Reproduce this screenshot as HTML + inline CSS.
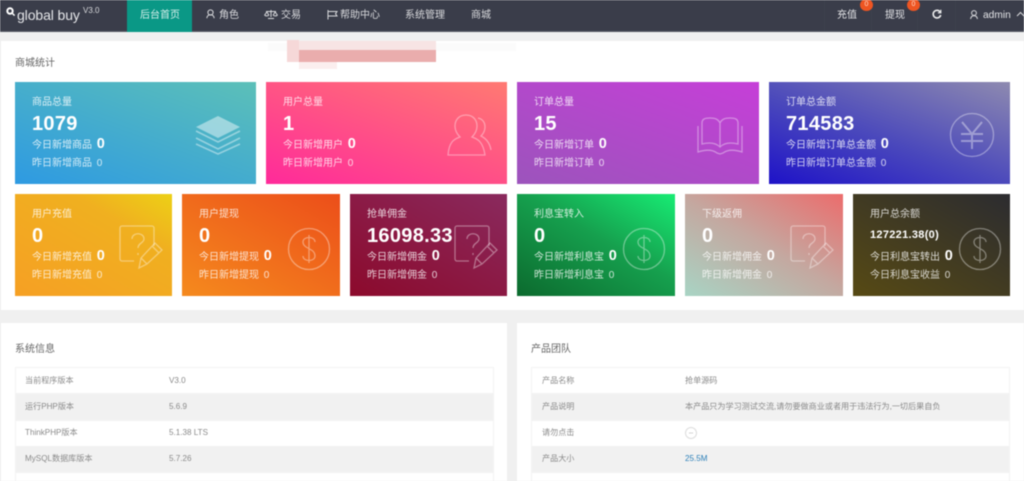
<!DOCTYPE html>
<html lang="zh"><head><meta charset="utf-8"><title>global buy</title>
<style>
*{box-sizing:border-box}
html,body{margin:0;padding:0;width:1024px;height:481px;overflow:hidden;background:#f0f0f0}
body{font-family:"Liberation Sans","Noto Sans CJK SC",sans-serif;position:relative}
#w{position:absolute;left:0;top:0;width:1024px;height:481px;overflow:hidden;filter:blur(.5px)}
.a{position:absolute;white-space:nowrap;line-height:1}
.nav{position:absolute;left:0;top:0;width:1024px;height:32px;background:#3a3d4a;border-bottom:1px solid #5a5c66}
.n{position:absolute;top:10px;font-size:10px;line-height:11px;color:#d8d9dc;white-space:nowrap}
.sep{position:absolute;top:0;width:1px;height:31px;background:#3e414d}
.bd{position:absolute;top:-1px;width:13px;height:12px;border-radius:50%;background:#ee5522;color:#ffd9c8;font-size:7px;line-height:11px;text-align:center}
.p{position:absolute;background:#fff}
.c{position:absolute;height:102px;color:#fff;overflow:hidden}
.c div{position:absolute;left:17px;white-space:nowrap;line-height:1}
.t{top:16px;font-size:10px;color:rgba(255,255,255,.8)}
.v{top:32px;font-size:20px;font-weight:bold;letter-spacing:.3px}
.d{top:55px;font-size:10px;color:rgba(255,255,255,.8)}
.d b{font-size:14.5px;color:#fff;margin-left:2px;position:relative;top:0}
.y{top:77px;font-size:10px;color:rgba(255,255,255,.78)}
.y i{font-style:normal;margin-left:2px}
.c svg{position:absolute;fill:none;stroke:rgba(255,255,255,.38);stroke-width:1.3}
.h{position:absolute;font-size:10px;line-height:11px;color:#666;white-space:nowrap}
.r{position:absolute;height:27px;border:1px solid #f3f3f3;border-top:0;font-size:8.1px;line-height:26px;color:#8a8a8a;white-space:nowrap}
.r.g{background:#f1f1f1}
.r span{position:absolute;top:0}
</style></head><body><div id="w">

<div class="nav">
<svg class="a" style="left:6px;top:7px" width="10" height="10" viewBox="0 0 10 10"><circle cx="4" cy="4" r="2.700" fill="#3a3d4a" stroke="#fff" stroke-width="2"/><path d="M6 6l2.600 2.600" stroke="#fff" stroke-width="1.500"/></svg>
<div class="a" style="left:17px;top:6px;font-size:14px;color:#e4e5e8;line-height:18px;letter-spacing:-.1px">global buy</div>
<div class="a" style="left:83px;top:7px;font-size:8px;color:#d8d9dc">V3.0</div>
<div class="a" style="left:127px;top:0;width:65px;height:32px;background:#0a9886"></div>
<div class="n" style="left:140px;color:#d7f0ec">后台首页</div>
<svg class="a" style="left:206px;top:9px" width="9" height="11" viewBox="0 0 9 11" fill="none" stroke="#d8d9dc"><circle cx="4.500" cy="3.500" r="2.600"/><path d="M.8 9.200c.4-2.600 1.800-3.400 3.700-3.400s3.300.8 3.700 3.400"/></svg>
<div class="n" style="left:219px">角色</div>
<svg class="a" style="left:264px;top:9px" width="14" height="11" viewBox="0 0 14 11" fill="none" stroke="#d8d9dc"><path d="M2 2.500h10M7 1v7M4 9.500h6M.7 6L2.800 3l2 3c-.4 1.200-3.600 1.200-4.100 0zM9.200 6l2-3 2.100 3c-.5 1.200-3.700 1.200-4.100 0z"/></svg>
<div class="n" style="left:281px">交易</div>
<svg class="a" style="left:327px;top:10px" width="11" height="10" viewBox="0 0 11 10" fill="none" stroke="#d8d9dc"><path d="M1 0v9.500M1 1.500h9L8.500 3.800 10 6H1"/></svg>
<div class="n" style="left:340px">帮助中心</div>
<div class="n" style="left:405px">系统管理</div>
<div class="n" style="left:471px">商城</div>
<div class="sep" style="left:824px"></div><div class="sep" style="left:871px"></div><div class="sep" style="left:917px"></div><div class="sep" style="left:955px"></div>
<div class="n" style="left:837px;color:#e4e5e8">充值</div>
<div class="bd" style="left:860px">0</div>
<div class="n" style="left:885px;color:#e4e5e8">提现</div>
<div class="bd" style="left:907px">0</div>
<svg class="a" style="left:932px;top:9px" width="10" height="10" viewBox="0 0 10 10" fill="none" stroke="#eceded" stroke-width="1.600"><path d="M8.300 3.200A3.800 3.800 0 1 0 8.700 6"/><path d="M8.800 .8v3H5.900" stroke-width="1.200"/></svg>
<svg class="a" style="left:970px;top:10px" width="8" height="10" viewBox="0 0 8 10" fill="none" stroke="#d8d9dc"><circle cx="4" cy="3" r="2.400"/><path d="M.6 9c.3-2.500 1.600-3.300 3.400-3.300S7.100 6.500 7.400 9"/></svg>
<div class="n" style="left:983px;font-size:10.200px;color:#e4e5e8">admin</div>
<svg class="a" style="left:1016px;top:11px" width="9" height="6" viewBox="0 0 9 6" fill="none" stroke="#d8d9dc"><path d="M1 5l3.500-3.500L8 5"/></svg>
</div>

<div class="p" style="left:1px;top:41px;width:1023px;height:269px"></div>
<div class="a" style="left:268px;top:43px;width:248px;height:8px;background:#fbfbfb"></div>
<div class="a" style="left:287px;top:41px;width:149px;height:9px;background:#f7e4e4"></div>
<div class="a" style="left:287px;top:40px;width:12px;height:22px;background:#f6d8d8"></div>
<div class="a" style="left:299px;top:50px;width:137px;height:12px;background:#eaadad"></div>
<div class="a" style="left:299px;top:62px;width:38px;height:7px;background:#fbeeee"></div>
<div class="h" style="left:15px;top:58px">商城统计</div>

<div class="c" style="left:15px;top:82px;width:241px;background:linear-gradient(20deg,#2e9ae2,#5cc0b8)"><div class="t">商品总量</div><div class="v">1079</div><div class="d">今日新增商品 <b>0</b></div><div class="y">昨日新增商品 <i>0</i></div>
<svg style="left:180px;top:32px;stroke:none" width="46" height="42" viewBox="0 0 46 42"><path d="M23 2L45 13 23 24 1 13z" fill="rgba(255,255,255,.45)"/><path d="M1 17l22 11 22-11M1 24l22 11 22-11M1 30l22 10 22-10" stroke="rgba(255,255,255,.42)" stroke-width="1.600" fill="none"/></svg></div>

<div class="c" style="left:266px;top:82px;width:241px;background:linear-gradient(20deg,#ff2a9a,#ff7a72)"><div class="t">用户总量</div><div class="v">1</div><div class="d">今日新增用户 <b>0</b></div><div class="y">昨日新增用户 <i>0</i></div>
<svg style="left:180px;top:32px" width="48" height="44" viewBox="0 0 48 44"><path d="M20 1c7 0 11 5 11 11 0 5-2 8-5 11 6 2 11 5 13 18H2C3 28 8 25 14 23c-3-3-5-6-5-11C9 6 13 1 20 1z"/><path d="M32 4c5 1 7 5 7 9 0 4-2 7-4 9 6 3 9 8 10 14"/></svg></div>

<div class="c" style="left:517px;top:82px;width:242px;background:linear-gradient(20deg,#9c54bc,#c63fd8)"><div class="t">订单总量</div><div class="v">15</div><div class="d">今日新增订单 <b>0</b></div><div class="y">昨日新增订单 <i>0</i></div>
<svg style="left:180px;top:35px" width="46" height="38" viewBox="0 0 46 38"><path d="M5 27V6c0-4 3-5 8-5 5 0 8 1 10 5 2-4 5-5 10-5 5 0 8 1 8 5v21c-8-2-14-1-18 3-4-4-10-5-18-3zM23 6v24"/><path d="M1 9v26c9-3 15-2 19 1l3 1 3-1c4-3 10-4 19-1V9"/></svg></div>

<div class="c" style="left:769px;top:82px;width:241px;background:linear-gradient(20deg,#1e12c8,#4a48bc 45%,#8e8ab0)"><div class="t">订单总金额</div><div class="v">714583</div><div class="d">今日新增订单总金额 <b>0</b></div><div class="y">昨日新增订单总金额 <i>0</i></div>
<svg style="left:180px;top:30px" width="46" height="46" viewBox="0 0 46 46"><circle cx="23" cy="23" r="21.500"/><path d="M13 10l10 12 10-12M12 22h22M12 29h22M23 22v15" stroke-width="2"/></svg></div>

<div class="c" style="left:15px;top:194px;width:157px;background:linear-gradient(30deg,#f6a024,#f0b020 70%,#edd016)"><div class="t">用户充值</div><div class="v">0</div><div class="d">今日新增充值 <b>0</b></div><div class="y">昨日新增充值 <i>0</i></div>
<svg style="left:104px;top:31px" width="44" height="44" viewBox="0 0 44 44"><path d="M15 36H3a2 2 0 0 1-2-2V3a2 2 0 0 1 2-2h30a2 2 0 0 1 2 2v18"/><path d="M13 14c0-7 12-7 12 0 0 4-6 4-6 9M19 28v2"/><path d="M20 43l2-10 14-15 7 7-15 14zM22 33l6 6M33 21l7 7"/></svg></div>

<div class="c" style="left:182px;top:194px;width:158px;background:linear-gradient(30deg,#f58a1e,#ec4e1a)"><div class="t">用户提现</div><div class="v">0</div><div class="d">今日新增提现 <b>0</b></div><div class="y">昨日新增提现 <i>0</i></div>
<svg style="left:105px;top:33px" width="44" height="44" viewBox="0 0 44 44"><circle cx="22" cy="22" r="20.500"/><path d="M28 15c0-6-12-6-12 0 0 7 12 6 12 14 0 6-12 6-12 0M22 8v28"/></svg></div>

<div class="c" style="left:350px;top:194px;width:157px;background:linear-gradient(30deg,#8c0a2c,#8a2a5e)"><div class="t">抢单佣金</div><div class="v">16098.33</div><div class="d">今日新增佣金 <b>0</b></div><div class="y">昨日新增佣金 <i>0</i></div>
<svg style="left:104px;top:31px" width="44" height="44" viewBox="0 0 44 44"><path d="M15 36H3a2 2 0 0 1-2-2V3a2 2 0 0 1 2-2h30a2 2 0 0 1 2 2v18"/><path d="M13 14c0-7 12-7 12 0 0 4-6 4-6 9M19 28v2"/><path d="M20 43l2-10 14-15 7 7-15 14zM22 33l6 6M33 21l7 7"/></svg></div>

<div class="c" style="left:517px;top:194px;width:158px;background:linear-gradient(30deg,#0c6a2e,#16a04e 55%,#18ec74)"><div class="t">利息宝转入</div><div class="v">0</div><div class="d">今日新增利息宝 <b>0</b></div><div class="y">昨日新增利息宝 <i>0</i></div>
<svg style="left:105px;top:33px" width="44" height="44" viewBox="0 0 44 44"><circle cx="22" cy="22" r="20.500"/><path d="M28 15c0-6-12-6-12 0 0 7 12 6 12 14 0 6-12 6-12 0M22 8v28"/></svg></div>

<div class="c" style="left:685px;top:194px;width:158px;background:linear-gradient(30deg,#a8d4c4,#c4a8a0 50%,#ec6c6c)"><div class="t">下级返佣</div><div class="v">0</div><div class="d">今日新增佣金 <b>0</b></div><div class="y">昨日新增佣金 <i>0</i></div>
<svg style="left:105px;top:31px" width="44" height="44" viewBox="0 0 44 44"><path d="M15 36H3a2 2 0 0 1-2-2V3a2 2 0 0 1 2-2h30a2 2 0 0 1 2 2v18"/><path d="M13 14c0-7 12-7 12 0 0 4-6 4-6 9M19 28v2"/><path d="M20 43l2-10 14-15 7 7-15 14zM22 33l6 6M33 21l7 7"/></svg></div>

<div class="c" style="left:853px;top:194px;width:157px;background:linear-gradient(30deg,#574a14,#2c2c30)"><div class="t">用户总余额</div><div class="v" style="font-size:11px;top:36px">127221.38(0)</div><div class="d">今日利息宝转出 <b>0</b></div><div class="y">今日利息宝收益 <i>0</i></div>
<svg style="left:105px;top:33px" width="44" height="44" viewBox="0 0 44 44"><circle cx="22" cy="22" r="20.500"/><path d="M28 15c0-6-12-6-12 0 0 7 12 6 12 14 0 6-12 6-12 0M22 8v28"/></svg></div>

<div class="p" style="left:1px;top:323px;width:506px;height:158px"></div>
<div class="p" style="left:517px;top:323px;width:507px;height:158px"></div>
<div class="h" style="left:15px;top:344px">系统信息</div>
<div class="h" style="left:531px;top:344px">产品团队</div>

<div class="r" style="left:15px;top:367px;width:479px;border-top:1px solid #f3f3f3"><span style="left:9px">当前程序版本</span><span style="left:153px">V3.0</span></div>
<div class="r g" style="left:15px;top:394px;width:479px"><span style="left:9px">运行PHP版本</span><span style="left:153px">5.6.9</span></div>
<div class="r" style="left:15px;top:420px;width:479px"><span style="left:9px">ThinkPHP版本</span><span style="left:153px">5.1.38 LTS</span></div>
<div class="r g" style="left:15px;top:446px;width:479px"><span style="left:9px">MySQL数据库版本</span><span style="left:153px">5.7.26</span></div>
<div class="r" style="left:15px;top:473px;width:479px"></div>

<div class="r" style="left:531px;top:367px;width:479px;border-top:1px solid #f3f3f3"><span style="left:10px">产品名称</span><span style="left:153px">抢单源码</span></div>
<div class="r g" style="left:531px;top:394px;width:479px"><span style="left:10px">产品说明</span><span style="left:153px">本产品只为学习测试交流,请勿要做商业或者用于违法行为,一切后果自负</span></div>
<div class="r" style="left:531px;top:420px;width:479px"><span style="left:10px">请勿点击</span><span style="left:153px;top:7px;width:12px;height:12px;border:1px solid #ddd;border-radius:50%;font-size:4px;line-height:10px;text-align:center;color:#bbb">•••</span></div>
<div class="r g" style="left:531px;top:446px;width:479px"><span style="left:10px">产品大小</span><span style="left:153px;color:#2b7fb8">25.5M</span></div>
<div class="r" style="left:531px;top:473px;width:479px"></div>

</div></body></html>
